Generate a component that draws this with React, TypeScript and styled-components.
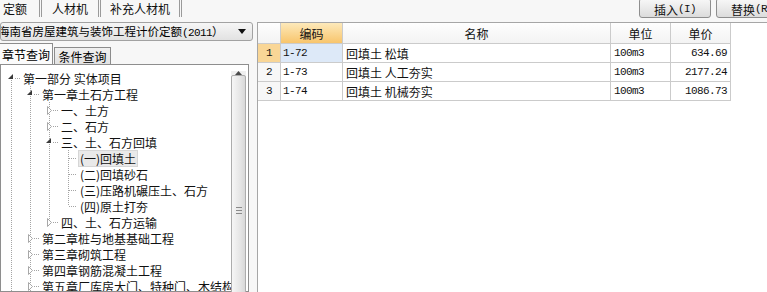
import React from 'react';
import styled, { createGlobalStyle } from 'styled-components';

const GlobalStyle = createGlobalStyle`
  html, body { margin: 0; padding: 0; background: #f7f7f7; overflow: hidden; }
  body {
    font-family: "Noto Sans CJK SC", "Liberation Sans", sans-serif;
    font-size: 12px;
    color: #000;
  }
`;

const Root = styled.div`
  display: grid;
  grid-template-columns: 253px 1fr;
  column-gap: 4px;
  width: 767px;
  height: 292px;
  overflow: hidden;
`;

/* ---------- left column ---------- */
const LeftCol = styled.div`
  display: flex;
  flex-direction: column;
  min-height: 0;
  overflow: hidden;
`;

const TopTabs = styled.div`
  display: flex;
  height: 17px;
  align-items: stretch;
`;

const TopTab = styled.div<{ $w: number; $first?: boolean }>`
  flex: none;
  width: ${(p) => p.$w}px;
  margin-left: ${(p) => (p.$first ? -9 : 0)}px;
  border-right: 3px double #9a9a9a;
  display: flex;
  align-items: center;
  justify-content: center;
  font-size: 12px;
  line-height: 17px;
  color: #111;
`;

const Dropdown = styled.div`
  margin-top: 5px;
  height: 17px;
  border: 1px solid #a2a2a2;
  border-radius: 3px;
  background: linear-gradient(#f6f6f6, #e2e2e2);
  display: flex;
  align-items: center;
  justify-content: space-between;
  overflow: hidden;
`;

const DropText = styled.span`
  margin-left: -3px;
  font-size: 11.5px;
  line-height: 16px;
  white-space: nowrap;
`;

const Mono = styled.span`
  font-family: "Liberation Mono", monospace;
  font-size: 11px;
  letter-spacing: -0.6px;
`;

const DropArrow = styled.svg`
  flex: none;
  margin-right: 6px;
`;

const SubTabs = styled.div`
  margin-top: 2px;
  height: 21px;
  display: flex;
  align-items: flex-end;
`;

const SubTab = styled.div<{ $active?: boolean }>`
  flex: none;
  box-sizing: border-box;
  height: ${(p) => (p.$active ? 21 : 17)}px;
  width: ${(p) => (p.$active ? 54 : 57)}px;
  margin-left: ${(p) => (p.$active ? -1 : 1)}px;
  border: 1px solid #8c8c8c;
  border-bottom: none;
  border-left-color: ${(p) => (p.$active ? 'transparent' : '#8c8c8c')};
  background: ${(p) => (p.$active ? '#fbfbfb' : 'linear-gradient(#f0f0f0, #e2e2e2)')};
  display: flex;
  align-items: center;
  justify-content: center;
  font-size: 12px;
  line-height: 15px;
`;

const TreeBox = styled.div`
  flex: 1;
  min-height: 0;
  width: 249px;
  box-sizing: border-box;
  border: 1px solid #8e8e8e;
  background: #fff;
  display: flex;
`;

const TreeList = styled.div`
  flex: 1;
  min-width: 0;
  padding-top: 5px;
  overflow: hidden;
`;

const TreeRow = styled.div`
  display: flex;
  height: 16px;
  align-items: center;
  white-space: nowrap;
`;

const GuideSvg = styled.svg`
  flex: none;
  display: block;
`;

const TreeLabel = styled.span<{ $selected?: boolean }>`
  margin-left: 1px;
  padding: 0 1px;
  height: 15px;
  line-height: 15px;
  border: 1px solid ${(p) => (p.$selected ? '#d6d6d6' : 'transparent')};
  background: ${(p) => (p.$selected ? '#e9e9e9' : 'transparent')};
  font-size: 12px;
  color: #111;
`;

const ScrollBar = styled.div`
  flex: none;
  width: 15px;
  margin: 6px 2px 0 0;
  background: #efefef;
  display: flex;
  flex-direction: column;
`;

const ScrollBtn = styled.div`
  height: 16px;
  display: flex;
  align-items: center;
  justify-content: center;
`;

const Thumb = styled.div`
  flex: none;
  height: 270px;
  box-sizing: border-box;
  border: 1px solid #acacac;
  border-radius: 2px;
  background: linear-gradient(90deg, #f6f6f6, #e6e6e6 60%, #d8d8d8);
  display: flex;
  align-items: center;
  justify-content: center;
`;

/* ---------- right column ---------- */
const RightCol = styled.div`
  display: flex;
  flex-direction: column;
  min-height: 0;
  overflow: hidden;
`;

const Toolbar = styled.div`
  height: 20px;
  display: flex;
  justify-content: flex-end;
  gap: 5px;
  margin-right: -21px;
`;

const ToolButton = styled.div`
  flex: none;
  width: 72px;
  height: 20px;
  margin-top: -2px;
  box-sizing: border-box;
  border: 1px solid #8e8e8e;
  border-radius: 3px;
  background: linear-gradient(#f8f8f8, #dcdcdc);
  display: flex;
  align-items: center;
  justify-content: center;
  padding-top: 3px;
  font-size: 12px;
  line-height: 15px;
  color: #111;
`;

const GridBox = styled.div`
  margin-top: 2px;
  flex: 1;
  border-top: 1px solid #a6a6a6;
  border-left: 1px solid #a6a6a6;
  background: #fff;
`;

const GridTable = styled.div`
  display: grid;
  grid-template-columns: 23px 62px 268px 60px 60px;
  grid-auto-rows: 19px;
  grid-template-rows: 21px;
  width: 473px;
`;

type CellKind = 'head' | 'headHot' | 'num' | 'numHot' | 'code' | 'codeHot' | 'text' | 'mono' | 'right';

const Cell = styled.div<{ $kind: CellKind }>`
  box-sizing: border-box;
  border-right: 1px solid #cbcbcb;
  border-bottom: 1px solid #cbcbcb;
  display: flex;
  align-items: center;
  white-space: nowrap;
  overflow: hidden;
  padding: 0 3px;
  font-size: 12px;
  color: #111;
  justify-content: ${(p) =>
    p.$kind === 'head' || p.$kind === 'headHot' || p.$kind === 'num' || p.$kind === 'numHot'
      ? 'center'
      : p.$kind === 'right'
      ? 'flex-end'
      : 'flex-start'};
  background: ${(p) =>
    p.$kind === 'headHot'
      ? 'linear-gradient(#fde9ba, #f8c56c)'
      : p.$kind === 'head'
      ? 'linear-gradient(#fefefe, #f3f3f3)'
      : p.$kind === 'numHot'
      ? '#f9d696'
      : p.$kind === 'num'
      ? '#f7f7f7'
      : p.$kind === 'codeHot'
      ? '#dde9f8'
      : '#fff'};
  ${(p) =>
    p.$kind === 'num' || p.$kind === 'numHot' || p.$kind === 'code' || p.$kind === 'codeHot' || p.$kind === 'mono' || p.$kind === 'right'
      ? `font-family: "Liberation Mono", monospace; font-size: 11px; letter-spacing: -0.6px;`
      : ''}
  ${(p) => (p.$kind === 'code' || p.$kind === 'codeHot' ? 'padding-left: 2px;' : '')}
`;

/* ---------- data ---------- */
type Node = { label: string; level: number; kind: 'open' | 'closed' | 'leaf'; selected?: boolean };

const nodes: Node[] = [
  { label: '第一部分 实体项目', level: 0, kind: 'open' },
  { label: '第一章土石方工程', level: 1, kind: 'open' },
  { label: '一、土方', level: 2, kind: 'closed' },
  { label: '二、石方', level: 2, kind: 'closed' },
  { label: '三、土、石方回填', level: 2, kind: 'open' },
  { label: '(一)回填土', level: 3, kind: 'leaf', selected: true },
  { label: '(二)回填砂石', level: 3, kind: 'leaf' },
  { label: '(三)压路机碾压土、石方', level: 3, kind: 'leaf' },
  { label: '(四)原土打夯', level: 3, kind: 'leaf' },
  { label: '四、土、石方运输', level: 2, kind: 'closed' },
  { label: '第二章桩与地基基础工程', level: 1, kind: 'closed' },
  { label: '第三章砌筑工程', level: 1, kind: 'closed' },
  { label: '第四章钢筋混凝土工程', level: 1, kind: 'closed' },
  { label: '第五章厂库房大门、特种门、木结构', level: 1, kind: 'closed' },
];

function hasNext(i: number): boolean {
  const L = nodes[i].level;
  for (let j = i + 1; j < nodes.length; j++) {
    if (nodes[j].level < L) return false;
    if (nodes[j].level === L) return true;
  }
  return L <= 1;
}

function continuing(i: number, c: number): boolean {
  for (let j = i - 1; j >= 0; j--) {
    if (nodes[j].level === c) return hasNext(j);
  }
  return false;
}

const LINE = '#a4a4a4';

function Guide(props: { up?: boolean; down?: boolean; across?: boolean; glyph?: 'open' | 'closed' | 'leaf' }) {
  const { up, down, across, glyph } = props;
  const hasGlyph = glyph === 'open' || glyph === 'closed';
  return (
    <GuideSvg width={19} height={16} viewBox="0 0 19 16">
      {up && <line x1={10.5} y1={0} x2={10.5} y2={8} stroke={LINE} strokeDasharray="1 1" />}
      {down && <line x1={10.5} y1={8} x2={10.5} y2={16} stroke={LINE} strokeDasharray="1 1" />}
      {across && (
        <line x1={hasGlyph ? 14 : 11} y1={8.5} x2={19} y2={8.5} stroke={LINE} strokeDasharray="1 1" />
      )}
      {glyph === 'open' && <polygon points="12,4 12,9 7,9" fill="#3a3a3a" />}
      {glyph === 'closed' && (
        <polygon points="8.5,4.5 12.5,8.5 8.5,12.5" fill="#fff" stroke="#a8a8a8" strokeWidth={1} />
      )}
    </GuideSvg>
  );
}

const rows = [
  { n: '1', code: '1-72', name: '回填土 松填', unit: '100m3', price: '634.69', hot: true },
  { n: '2', code: '1-73', name: '回填土 人工夯实', unit: '100m3', price: '2177.24' },
  { n: '3', code: '1-74', name: '回填土 机械夯实', unit: '100m3', price: '1086.73' },
];

export default function App() {
  return (
    <>
      <GlobalStyle />
      <Root>
        <LeftCol>
          <TopTabs>
            <TopTab $w={48} $first>定额</TopTab>
            <TopTab $w={56}>人材机</TopTab>
            <TopTab $w={78}>补充人材机</TopTab>
          </TopTabs>
          <Dropdown>
            <DropText>
              海南省房屋建筑与装饰工程计价定额<Mono>(2011</Mono>）
            </DropText>
            <DropArrow width={8} height={5} viewBox="0 0 8 5">
              <polygon points="0,0 8,0 4,5" fill="#111" />
            </DropArrow>
          </Dropdown>
          <SubTabs>
            <SubTab $active>章节查询</SubTab>
            <SubTab>条件查询</SubTab>
          </SubTabs>
          <TreeBox>
            <TreeList>
              {nodes.map((node, i) => {
                const guides = [];
                for (let c = 0; c < node.level; c++) {
                  const on = continuing(i, c);
                  guides.push(<Guide key={c} up={on} down={on} />);
                }
                guides.push(
                  <Guide key="own" up={i > 0} down={hasNext(i)} across glyph={node.kind} />
                );
                return (
                  <TreeRow key={i}>
                    {guides}
                    <TreeLabel $selected={node.selected}>{node.label}</TreeLabel>
                  </TreeRow>
                );
              })}
            </TreeList>
            <ScrollBar>
              <ScrollBtn>
                <svg width={7} height={4} viewBox="0 0 7 4">
                  <polygon points="0,4 7,4 3.5,0" fill="#4a4a4a" />
                </svg>
              </ScrollBtn>
              <Thumb>
                <svg width={6} height={7} viewBox="0 0 6 7">
                  <line x1={0} y1={0.5} x2={6} y2={0.5} stroke="#8a8a8a" />
                  <line x1={0} y1={3.5} x2={6} y2={3.5} stroke="#8a8a8a" />
                  <line x1={0} y1={6.5} x2={6} y2={6.5} stroke="#8a8a8a" />
                </svg>
              </Thumb>
            </ScrollBar>
          </TreeBox>
        </LeftCol>
        <RightCol>
          <Toolbar>
            <ToolButton>
              插入<Mono>(I)</Mono>
            </ToolButton>
            <ToolButton>
              替换<Mono>(R)</Mono>
            </ToolButton>
          </Toolbar>
          <GridBox>
            <GridTable>
              <Cell $kind="head"></Cell>
              <Cell $kind="headHot">编码</Cell>
              <Cell $kind="head">名称</Cell>
              <Cell $kind="head">单位</Cell>
              <Cell $kind="head">单价</Cell>
              {rows.map((r) => (
                <React.Fragment key={r.n}>
                  <Cell $kind={r.hot ? 'numHot' : 'num'}>{r.n}</Cell>
                  <Cell $kind={r.hot ? 'codeHot' : 'code'}>{r.code}</Cell>
                  <Cell $kind="text">{r.name}</Cell>
                  <Cell $kind="mono">{r.unit}</Cell>
                  <Cell $kind="right">{r.price}</Cell>
                </React.Fragment>
              ))}
            </GridTable>
          </GridBox>
        </RightCol>
      </Root>
    </>
  );
}
